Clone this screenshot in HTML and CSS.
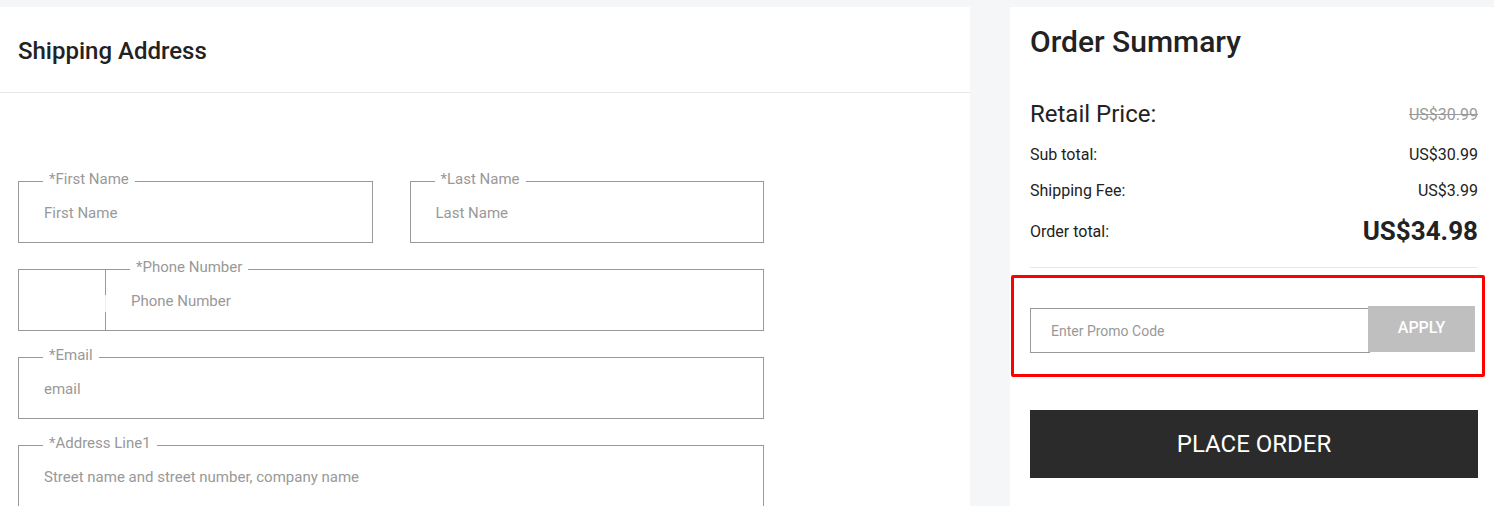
FILE: index.html
```html
<!DOCTYPE html>
<html lang="en">
<head>
    <meta charset="UTF-8">
    <meta name="viewport" content="width=device-width, initial-scale=1.0">
    <title>Checkout</title>
    <link rel="stylesheet" href="styles.css">
</head>
<body>
    <div class="checkout">
        <section class="address">
            <div class="address-head">
                <h2>Shipping Address</h2>
            </div>
            <form class="address-form">
                <div class="row">
                    <div class="field">
                        <label for="firstName">*First Name</label>
                        <input type="text" id="firstName" placeholder="First Name">
                    </div>
                    <div class="field">
                        <label for="lastName">*Last Name</label>
                        <input type="text" id="lastName" placeholder="Last Name">
                    </div>
                </div>
                <div class="field field-phone">
                    <div class="phone-code"></div>
                    <div class="phone-number">
                        <label for="phone">*Phone Number</label>
                        <input type="tel" id="phone" placeholder="Phone Number">
                    </div>
                </div>
                <div class="field">
                    <label for="email">*Email</label>
                    <input type="email" id="email" placeholder="email">
                </div>
                <div class="field">
                    <label for="address1">*Address Line1</label>
                    <input type="text" id="address1" placeholder="Street name and street number, company name">
                </div>
            </form>
        </section>

        <aside class="summary">
            <h2>Order Summary</h2>
            <div class="line line-retail">
                <span>Retail Price:</span>
                <span class="old-price">US$30.99</span>
            </div>
            <div class="line">
                <span>Sub total:</span>
                <span>US$30.99</span>
            </div>
            <div class="line">
                <span>Shipping Fee:</span>
                <span>US$3.99</span>
            </div>
            <div class="line line-total">
                <span>Order total:</span>
                <span class="total">US$34.98</span>
            </div>

            <div class="promo">
                <input type="text" placeholder="Enter Promo Code">
                <button type="button" class="btn-apply">APPLY</button>
            </div>

            <button type="button" class="btn-order">PLACE ORDER</button>
        </aside>
    </div>
</body>
</html>
```

FILE: styles.css
```css
body {
    font-family: Roboto, "Liberation Sans", Arial, sans-serif;
    background-color: #f5f6f8;
    margin: 0;
    color: #222;
}
.checkout {
    display: flex;
    gap: 40px;
    padding-top: 7px;
    min-height: 499px;
}

/* левая колонка: адрес доставки */
.address {
    flex: 0 0 970px;
    background: #fff;
}
.address-head {
    height: 86px;
    box-sizing: border-box;
    padding: 30px 18px 0;
    border-bottom: 1px solid #e8e8e8;
}
.address-head h2 {
    margin: 0;
    font-size: 24px;
    line-height: 28px;
    font-weight: 500;
}
.address-form {
    width: 746px;
    padding: 88px 18px 0;
    display: flex;
    flex-direction: column;
    gap: 26px;
}
.row {
    display: flex;
    gap: 37px;
}
.row .field {
    flex: 1;
}
.field {
    position: relative;
    height: 62px;
    box-sizing: border-box;
    border: 1px solid #999;
    display: flex;
}
.field label {
    position: absolute;
    top: -12px;
    left: 24px;
    padding: 0 6px;
    background: #fff;
    font-size: 15px;
    line-height: 18px;
    color: #999;
}
.field input {
    flex: 1;
    width: 100%;
    border: none;
    outline: none;
    padding: 0 25px;
    padding-top: 1px;
    font-family: inherit;
    font-size: 15px;
    color: #333;
    background: transparent;
}
input::placeholder {
    color: #999;
}
.phone-code {
    width: 86px;
    border-right: 1px solid #999;
    position: relative;
}
/* просвет в разделителе от выпадающего списка кода страны */
.phone-code::after {
    content: "";
    position: absolute;
    right: -1px;
    top: 25px;
    width: 1px;
    height: 17px;
    background: #eee;
}
.phone-number {
    position: relative;
    flex: 1;
    display: flex;
}

/* правая колонка: итог заказа */
.summary {
    flex: 1;
    min-width: 0;
    background: #fff;
    padding: 17px 16px 0 20px;
}
.summary h2 {
    margin: 0 0 34px;
    font-size: 30px;
    line-height: 36px;
    font-weight: 500;
}
.line {
    display: flex;
    justify-content: space-between;
    align-items: center;
    height: 36px;
    font-size: 16px;
    color: #222;
}
.line-retail {
    height: 40px;
    margin-bottom: 2px;
    font-size: 24px;
}
.old-price {
    font-size: 16px;
    color: #999;
    text-decoration: line-through;
}
.line-total {
    height: 46px;
    padding-bottom: 13px;
    border-bottom: 1px solid #e8e8e8;
}
.total {
    font-size: 26px;
    font-weight: 700;
}

.promo {
    display: flex;
    align-items: flex-start;
    width: 474px;
    height: 102px;
    box-sizing: border-box;
    margin: 7px 0 0 -19px;
    padding: 28px 0 0 16px;
    border: 3px solid #f00;
    border-radius: 2px;
}
.promo input {
    width: 340px;
    height: 45px;
    box-sizing: border-box;
    margin-top: 2px;
    padding: 0 20px;
    border: 1px solid #999;
    outline: none;
    font-family: inherit;
    font-size: 14px;
}
.btn-apply {
    width: 107px;
    height: 46px;
    margin-left: -2px;
    border: none;
    background: #bfbfbf;
    color: #fff;
    font-family: inherit;
    font-size: 16px;
    font-weight: 500;
    padding-bottom: 4px;
    cursor: pointer;
}
.btn-order {
    display: block;
    width: 448px;
    height: 68px;
    margin-top: 33px;
    border: none;
    background: #2b2b2b;
    color: #fff;
    font-family: inherit;
    font-size: 24px;
    cursor: pointer;
}
```
